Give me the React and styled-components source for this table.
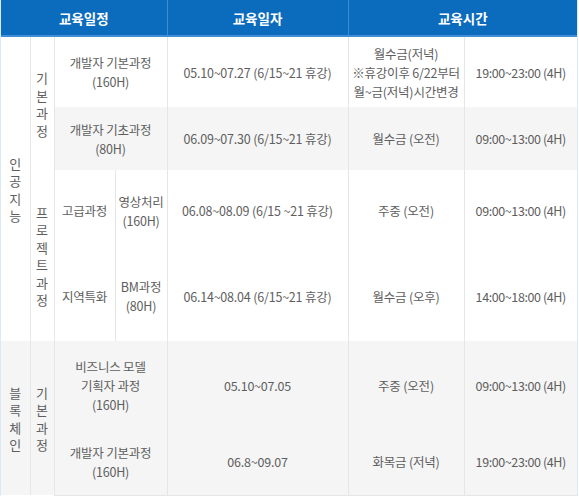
import React from "react";
import styled, { createGlobalStyle } from "styled-components";

const GlobalStyle = createGlobalStyle`
  body {
    margin: 0;
    background: #fff;
    font-family: "Noto Sans CJK KR", "Noto Sans", sans-serif;
  }
`;

const Wrap = styled.div`
  width: 576px;
  border-left: 1px solid #dce9f6;
  border-right: 1px solid #dce9f6;
`;

const Table = styled.table`
  width: 576px;
  border-collapse: collapse;
  table-layout: fixed;
  font-size: 12.5px;
  color: #5e5e5e;
`;

const Head = styled.th`
  height: 35px;
  padding: 0;
  background: #0b6cbe;
  color: #fff;
  font-weight: bold;
  font-size: 13.5px;
  border-right: 1px solid #3d8bd2;
  border-bottom: 2px solid #3f8fd6;
  &:last-child {
    border-right: none;
  }
`;

const Row = styled.tr`
  height: ${(p) => p.h}px;
  background: ${(p) => (p.gray ? "#f5f5f5" : "#fff")};
`;

const Cell = styled.td`
  padding: 0;
  text-align: center;
  vertical-align: middle;
  line-height: 19px;
  border-right: 1px solid #e6e6e6;
  background: ${(p) => (p.white ? "#fff" : "inherit")};
  letter-spacing: ${(p) => (p.tight ? "-0.4px" : "-0.2px")};
  white-space: nowrap;
  overflow: hidden;
  &:last-child {
    border-right: none;
  }
`;

const Vertical = styled.span`
  display: inline-flex;
  flex-direction: column;
  align-items: center;
  line-height: 17.5px;
  font-size: 13px;
`;

const Body = styled.tbody`
  tr:last-child td {
    border-bottom: 1px solid #e6e6e6;
  }
`;

const V = ({ text }) => (
  <Vertical>
    {[...text].map((c, i) => (
      <span key={i}>{c}</span>
    ))}
  </Vertical>
);

const Lines = ({ lines }) =>
  lines.map((l, i) => (
    <React.Fragment key={i}>
      {i > 0 && <br />}
      {l}
    </React.Fragment>
  ));

export default function App() {
  return (
    <>
      <GlobalStyle />
      <Wrap>
        <Table>
          <colgroup>
            <col style={{ width: 29 }} />
            <col style={{ width: 24 }} />
            <col style={{ width: 61 }} />
            <col style={{ width: 52 }} />
            <col style={{ width: 181 }} />
            <col style={{ width: 116 }} />
            <col style={{ width: 113 }} />
          </colgroup>
          <thead>
            <tr>
              <Head colSpan={4}>교육일정</Head>
              <Head>교육일자</Head>
              <Head colSpan={2}>교육시간</Head>
            </tr>
          </thead>
          <Body>
            <Row h={71}>
              <Cell rowSpan={4} white>
                <V text="인공지능" />
              </Cell>
              <Cell rowSpan={2} white>
                <V text="기본과정" />
              </Cell>
              <Cell colSpan={2}>
                <Lines lines={["개발자 기본과정", "(160H)"]} />
              </Cell>
              <Cell>05.10~07.27 (6/15~21 휴강)</Cell>
              <Cell>
                <Lines lines={["월수금(저녁)", "※휴강이후 6/22부터", "월~금(저녁)시간변경"]} />
              </Cell>
              <Cell tight>19:00~23:00 (4H)</Cell>
            </Row>
            <Row h={63} gray>
              <Cell colSpan={2}>
                <Lines lines={["개발자 기초과정", "(80H)"]} />
              </Cell>
              <Cell>06.09~07.30 (6/15~21 휴강)</Cell>
              <Cell>월수금 (오전)</Cell>
              <Cell tight>09:00~13:00 (4H)</Cell>
            </Row>
            <Row h={81}>
              <Cell rowSpan={2}>
                <V text="프로젝트과정" />
              </Cell>
              <Cell>고급과정</Cell>
              <Cell>
                <Lines lines={["영상처리", "(160H)"]} />
              </Cell>
              <Cell>06.08~08.09 (6/15 ~21 휴강)</Cell>
              <Cell>주중 (오전)</Cell>
              <Cell tight>09:00~13:00 (4H)</Cell>
            </Row>
            <Row h={90}>
              <Cell>지역특화</Cell>
              <Cell>
                <Lines lines={["BM과정", "(80H)"]} />
              </Cell>
              <Cell>06.14~08.04 (6/15~21 휴강)</Cell>
              <Cell>월수금 (오후)</Cell>
              <Cell tight>14:00~18:00 (4H)</Cell>
            </Row>
            <Row h={88} gray>
              <Cell rowSpan={2}>
                <V text="블록체인" />
              </Cell>
              <Cell rowSpan={2}>
                <V text="기본과정" />
              </Cell>
              <Cell colSpan={2}>
                <Lines lines={["비즈니스 모델", "기획자 과정", "(160H)"]} />
              </Cell>
              <Cell>05.10~07.05</Cell>
              <Cell>주중 (오전)</Cell>
              <Cell tight>09:00~13:00 (4H)</Cell>
            </Row>
            <Row h={66} gray>
              <Cell colSpan={2}>
                <Lines lines={["개발자 기본과정", "(160H)"]} />
              </Cell>
              <Cell>06.8~09.07</Cell>
              <Cell>화목금 (저녁)</Cell>
              <Cell tight>19:00~23:00 (4H)</Cell>
            </Row>
          </Body>
        </Table>
      </Wrap>
    </>
  );
}
